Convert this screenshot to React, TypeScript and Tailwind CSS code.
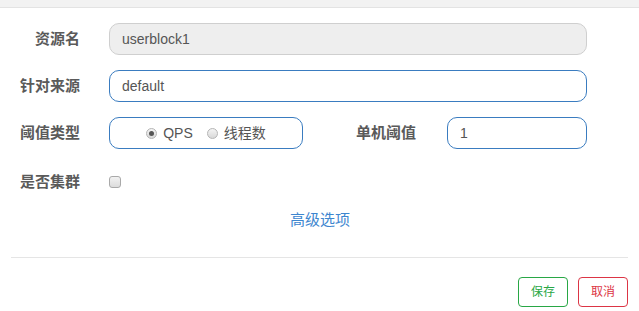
import React from "react";

const cjk = { fontFamily: '"Liberation Sans", "Noto Sans CJK SC", sans-serif' };

function Label({ children, w = "w-[80px]" }: { children: React.ReactNode; w?: string }) {
  return (
    <div className={`${w} shrink-0 text-right text-[15px] font-bold text-[#5a5a5a]`}>{children}</div>
  );
}

function Radio({ checked }: { checked?: boolean }) {
  return (
    <span className="inline-flex h-[11px] w-[11px] items-center justify-center rounded-full border border-[#b5b5b5] bg-gradient-to-b from-[#f4f4f4] to-[#d8d8d8]">
      {checked && <span className="h-[5px] w-[5px] rounded-full bg-[#555]" />}
    </span>
  );
}

export default function App() {
  return (
    <div className="h-[311px] w-[639px] overflow-hidden bg-white" style={cjk}>
      <div className="h-[8px] border-b border-[#e3e3e3] bg-[#f2f2f2]" />

      <div className="pt-[15px]">
        <div className="flex items-center">
          <Label>资源名</Label>
          <div className="ml-[29px] flex h-[32px] w-[478px] items-center rounded-[10px] border border-[#cfcfcf] bg-[#eeeeee] px-[12px] text-[14px] text-[#555]">
            userblock1
          </div>
        </div>

        <div className="mt-[15px] flex items-center">
          <Label>针对来源</Label>
          <div className="ml-[29px] flex h-[32px] w-[478px] items-center rounded-[10px] border border-[#3a7cc0] px-[12px] text-[14px] text-[#555]">
            default
          </div>
        </div>

        <div className="mt-[15px] flex items-center">
          <Label>阈值类型</Label>
          <div className="ml-[29px] flex h-[32px] w-[194px] items-center justify-center gap-[6px] rounded-[10px] border border-[#3a7cc0] text-[14px] text-[#555]">
            <Radio checked />
            <span>QPS</span>
            <span className="ml-[2px]" />
            <Radio />
            <span>线程数</span>
          </div>
          <Label w="w-[113px]">单机阈值</Label>
          <div className="ml-[31px] flex h-[32px] w-[140px] items-center rounded-[10px] border border-[#3a7cc0] px-[12px] text-[14px] text-[#555]">
            1
          </div>
        </div>

        <div className="mt-[22px] flex items-center">
          <Label>是否集群</Label>
          <span className="ml-[29px] h-[12px] w-[12px] rounded-[3px] border border-[#a9a9a9] bg-gradient-to-b from-[#f2f2f2] to-[#dcdcdc]" />
        </div>

        <div className="mt-[15px] text-center text-[15px] text-[#3d86cf]">
          <span className="ml-[1px]">高级选项</span>
        </div>

        <div className="mx-[11px] mt-[26px] border-t border-[#e5e5e5]" />

        <div className="mt-[19px] flex justify-end gap-[10px] pr-[11px]">
          <button className="h-[30px] w-[50px] rounded-[4px] border border-[#28a745] bg-white text-[12px] text-[#28a745]">
            保存
          </button>
          <button className="h-[30px] w-[50px] rounded-[4px] border border-[#dc3545] bg-white text-[12px] text-[#dc3545]">
            取消
          </button>
        </div>
      </div>
    </div>
  );
}
